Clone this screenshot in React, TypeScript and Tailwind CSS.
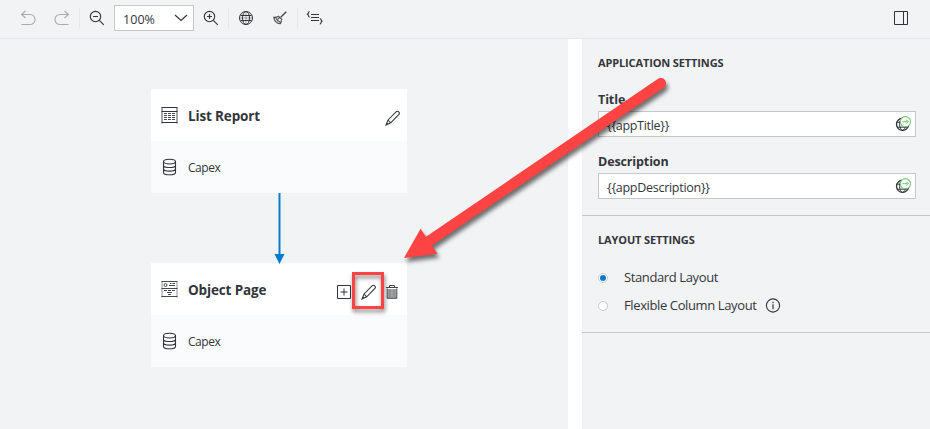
import React from "react";

const UndoIcon = ({ flip = false }: { flip?: boolean }) => (
  <svg width="16" height="16" viewBox="0 0 16 16" fill="none" stroke="#a9abae" strokeWidth="1.1" className={flip ? "-scale-x-100" : ""}>
    <path d="M5.5 1 1.5 4.5 5.5 8M1.5 4.5H10a4.9 4.9 0 0 1 0 10H1.5" />
  </svg>
);

const ZoomIcon = ({ plus = false }: { plus?: boolean }) => (
  <svg width="16" height="16" viewBox="0 0 16 16" fill="none" stroke="#32363a" strokeWidth="1.15">
    <circle cx="6.5" cy="6.5" r="5.2" />
    <path d="m10.3 10.3 4.5 4.5M4 6.5h5" />
    {plus && <path d="M6.5 4v5" />}
  </svg>
);

const GlobeIcon = () => (
  <svg width="16" height="16" viewBox="0 0 16 16" fill="none" stroke="#32363a" strokeWidth="1">
    <circle cx="8" cy="8" r="6.5" />
    <ellipse cx="8" cy="8" rx="3.5" ry="6.5" />
    <path d="M2.5 5.5h11M2.5 10.5h11" />
    <path d="M8 1.5v13M1.5 8h13" strokeOpacity="0.4" />
  </svg>
);

const BroomIcon = () => (
  <svg width="16" height="16" viewBox="0 0 16 16" fill="none" stroke="#45494d" strokeWidth="1">
    <path d="M14.3 1.7 8.7 7.3" strokeWidth="1.4" />
    <path d="M6.2 5.8 10.2 9.8M5.8 6.6C4.6 7.4 3.2 7.5 1.8 7.3c.6 3.4 3 6.2 6.4 6.4.9-.8 1.3-2 1.2-3.6M3.6 7.6c1 2.4 2.6 3.9 5 5M5.6 9.4l1.8-1.8" strokeWidth="1.15" />
  </svg>
);

const CodeListIcon = () => (
  <svg width="18" height="16" viewBox="0 0 18 16" fill="none" stroke="#32363a" strokeWidth="1.15">
    <path d="M5 4.5h8M5 7.5h8M5 10.5h8M3.7 1.5C1.8 1.5 3.3 3.9 1 4.2 3.3 4.5 1.8 7 3.7 7M13.8 8.5c1.9 0 .4 2.4 2.7 2.7-2.3.3-.8 2.8-2.7 2.8" />
  </svg>
);

const Pencil = () => (
  <svg width="16" height="16" viewBox="0 0 16 16" fill="none" stroke="#32363a" strokeWidth="1.05">
    <path d="M1 15 3 10 11.3 1.7c1.7-1.2 4 .9 2.6 2.7L5.7 12.8 1 15ZM3 10l2.7 2.8M1 15l1.8-1.3" />
  </svg>
);

const Database = () => (
  <svg width="16" height="18" viewBox="0 0 16 18" fill="none" stroke="#32363a" strokeWidth="1.1">
    <ellipse cx="8.5" cy="3.6" rx="6" ry="2.4" />
    <path d="M2.5 3.6v10.8c0 3.1 12 3.1 12 0V3.6M2.5 7.2c0 3.1 12 3.1 12 0M2.5 10.8c0 3.1 12 3.1 12 0" />
  </svg>
);

const ListReportIcon = () => (
  <svg width="17" height="17" viewBox="0 0 17 17" fill="none">
    <path d="M1 .5v16M16 .5v16" stroke="#8f9194" strokeWidth="1.6" />
    <path d="M.5.5h16M.5 4.5h16M.5 15.5h16" stroke="#32363a" />
    <path d="M3 6.5h11M3 8.5h11M3 10.5h11M3 12.5h11" stroke="#45494d" strokeDasharray="3 1" />
  </svg>
);

const ObjectPageIcon = () => (
  <svg width="17" height="17" viewBox="0 0 17 17" fill="none" stroke="#45494d">
    <path d="M1 .5v16M16 .5v16" stroke="#8f9194" />
    <path d="M.5.5h16M.5 7.5h16M.5 15.5h16M9 2.5h1.5M11.5 2.5H14M8 4.5h6M3 9.5h3M7 9.5h3M11 9.5h3M6 11.5h5M7 13.5h3" />
    <circle cx="4.5" cy="4" r="1.5" />
  </svg>
);

const TranslateIcon = () => (
  <svg width="18" height="18" viewBox="0 0 18 18" fill="none">
    <g stroke="#32363a">
      <circle cx="8.6" cy="9.3" r="6.1" strokeWidth="1.3" />
      <ellipse cx="8.6" cy="9.3" rx="3" ry="6.1" />
      <path d="M3 7.2h4M3.4 12.2h10.4" />
    </g>
    <circle cx="11.4" cy="6.7" r="5.1" fill="white" stroke="#78c578" strokeWidth="1.1" />
    <path d="M8.2 6.7h6M12.2 4.7l2 2-2 2" stroke="#78c578" />
  </svg>
);

const Separator = ({ className }: { className: string }) => <div className={`h-5 w-px bg-[#e5e7ea] ${className}`} />;

function PageCard({ title, icon, actions }: { title: string; icon: React.ReactNode; actions: React.ReactNode }) {
  return (
    <div className="h-[104px] w-64 shrink-0">
      <div className="flex h-[52px] items-center bg-white pr-1.5 pl-2.5">
        {icon}
        <span className="ml-[9.5px] pt-[3px] text-[13.5px] font-bold tracking-[-0.13px] whitespace-nowrap">{title}</span>
        <div className="ml-auto flex items-center pt-1.5">{actions}</div>
      </div>
      <div className="flex h-[52px] items-center bg-[#fafbfc] pl-2.5">
        <Database />
        <span className="ml-[10.5px] pt-px text-[12px] tracking-[-0.4px]">Capex</span>
      </div>
    </div>
  );
}

interface FieldProps {
  label: string;
  value: string;
  className: string;
  labelTracking: string;
  valueTracking: string;
}

function Field({ label, value, className, labelTracking, valueTracking }: FieldProps) {
  return (
    <div className={className}>
      <div className={`h-5 pt-px text-[12.5px] leading-5 font-bold ${labelTracking}`}>{label}</div>
      <div className="mt-0.5 flex h-[26px] items-center border border-[#c5c7c9] bg-white pr-[3px] pl-2">
        <span className={`pt-1 text-[12.5px] leading-[18px] ${valueTracking}`}>{value}</span>
        <span className="ml-auto"><TranslateIcon /></span>
      </div>
    </div>
  );
}

function Radio({ label, checked = false, children }: { label: string; checked?: boolean; children?: React.ReactNode }) {
  return (
    <div className="flex h-7 items-center">
      <span className="flex h-2.5 w-2.5 items-center justify-center rounded-full border border-[#c9cbcd] bg-white">
        {checked && <span className="h-1.5 w-1.5 rounded-full bg-[#0078d4]" />}
      </span>
      <span className="ml-4 text-[13px] tracking-[-0.38px] whitespace-nowrap">{label}</span>
      {children}
    </div>
  );
}

export default function App() {
  return (
    <div className="relative flex h-[429px] w-[930px] flex-col overflow-hidden bg-[#f2f3f5] font-['Open_Sans','Noto_Sans',sans-serif] text-[#32363a]">
      <header className="flex h-[39px] shrink-0 items-center border-b border-[#e5e7ea] pr-[21px] pb-0.5 pl-5">
        <UndoIcon />
        <span className="ml-[18px]"><UndoIcon flip /></span>
        <Separator className="ml-[9px]" />
        <span className="ml-[9px]"><ZoomIcon /></span>
        <div className="ml-[9px] flex h-[26px] w-20 items-center border border-[#c5c7c9] bg-white pr-[5px] pl-2">
          <span className="pt-1 text-[12.5px] leading-[18px] tracking-[0.05px]">100%</span>
          <svg className="ml-auto" width="14" height="10" viewBox="0 0 14 10" fill="none" stroke="#32363a" strokeWidth="1.2">
            <path d="m1 2 6 5.5L13 2" />
          </svg>
        </div>
        <span className="ml-[9px]"><ZoomIcon plus /></span>
        <Separator className="ml-[9px]" />
        <span className="ml-[9px]"><GlobeIcon /></span>
        <span className="ml-[18px]"><BroomIcon /></span>
        <Separator className="ml-[9px]" />
        <span className="ml-2"><CodeListIcon /></span>
        <svg className="ml-auto" width="16" height="16" viewBox="0 0 16 16" fill="none" stroke="#32363a">
          <path d="M1.5 1.5h13v13h-13zM10.5 1.5v13" />
        </svg>
      </header>

      <div className="flex min-h-0 grow">
        <main className="flex w-[568px] flex-col pt-[50px] pl-[151.4px]">
          <PageCard title="List Report" icon={<ListReportIcon />} actions={<Pencil />} />
          <svg className="z-10 -mb-px ml-[122px] shrink-0" width="13" height="71" viewBox="0 0 13 71">
            <path d="M6.5 0v63" stroke="#0a7ccf" strokeWidth="2" />
            <path d="M1.5 61h10L6.5 71z" fill="#007acc" />
          </svg>
          <PageCard
            title="Object Page"
            icon={<ObjectPageIcon />}
            actions={
              <>
                <svg width="16" height="16" viewBox="0 0 16 16" fill="none" stroke="#32363a">
                  <path d="M1.5 1.5h13v13h-13zM8 4.5v7M4.5 8h7" />
                </svg>
                <span className="ml-[9px]"><Pencil /></span>
                <svg className="mr-px ml-[7px]" width="16" height="16" viewBox="0 0 16 16" fill="none">
                  <path d="M3.5 5h9v9h-9z" fill="#a0a2a4" />
                  <path d="M6 5.5v7.5M10 5.5v7.5" stroke="#7f8285" />
                  <path d="M2 3.5h12M5.5 3.5v-2h5v2M3.2 4.5v9.8h9.6V4.5" stroke="#45494d" />
                </svg>
              </>
            }
          />
        </main>

        <div className="w-3.5 bg-white" />

        <aside className="w-[348px]">
          <section className="h-[177px] border-b border-[#c5c7c9] pt-4 pr-3.5 pl-4">
            <h2 className="h-4 text-[11px] leading-4 font-bold tracking-[-0.13px]">APPLICATION SETTINGS</h2>
            <Field className="mt-[18px]" label="Title" value="{{appTitle}}" labelTracking="tracking-[-0.1px]" valueTracking="tracking-[-0.3px]" />
            <Field className="mt-3.5" label="Description" value="{{appDescription}}" labelTracking="tracking-[-0.12px]" valueTracking="tracking-[-0.28px]" />
          </section>
          <section className="h-[117px] border-b border-[#c5c7c9] pt-4 pl-4">
            <h2 className="h-4 text-[11px] leading-4 font-bold tracking-[-0.13px]">LAYOUT SETTINGS</h2>
            <div className="mt-4">
              <Radio label="Standard Layout" checked />
              <Radio label="Flexible Column Layout">
                <svg className="ml-2" width="16" height="16" viewBox="0 0 16 16" fill="none" stroke="#32363a">
                  <circle cx="8" cy="7.5" r="6.6" strokeWidth="1.1" />
                  <path d="M8 6.2v5M8 3.7v1.5" stroke="#5b5e62" strokeWidth="1.5" />
                </svg>
              </Radio>
            </div>
          </section>
        </aside>
      </div>

      {/* Callout marks lying over the editor */}
      <div className="absolute top-[272px] left-[352px] z-20 h-[37px] w-8 border-[3px] border-[#fe4343] drop-shadow-[1px_3px_2px_rgba(0,0,0,0.5)]" />
      <svg className="pointer-events-none absolute inset-0 z-20 drop-shadow-[2px_4px_2px_rgba(0,0,0,0.55)]" width="930" height="429" viewBox="0 0 930 429">
        <path d="M429 241.2 660.7 83.3" stroke="#fe4343" strokeWidth="10.6" strokeLinecap="round" />
        <path d="M404 258 420.6 228.7 437.4 253.7z" fill="#fe4343" />
      </svg>
    </div>
  );
}
